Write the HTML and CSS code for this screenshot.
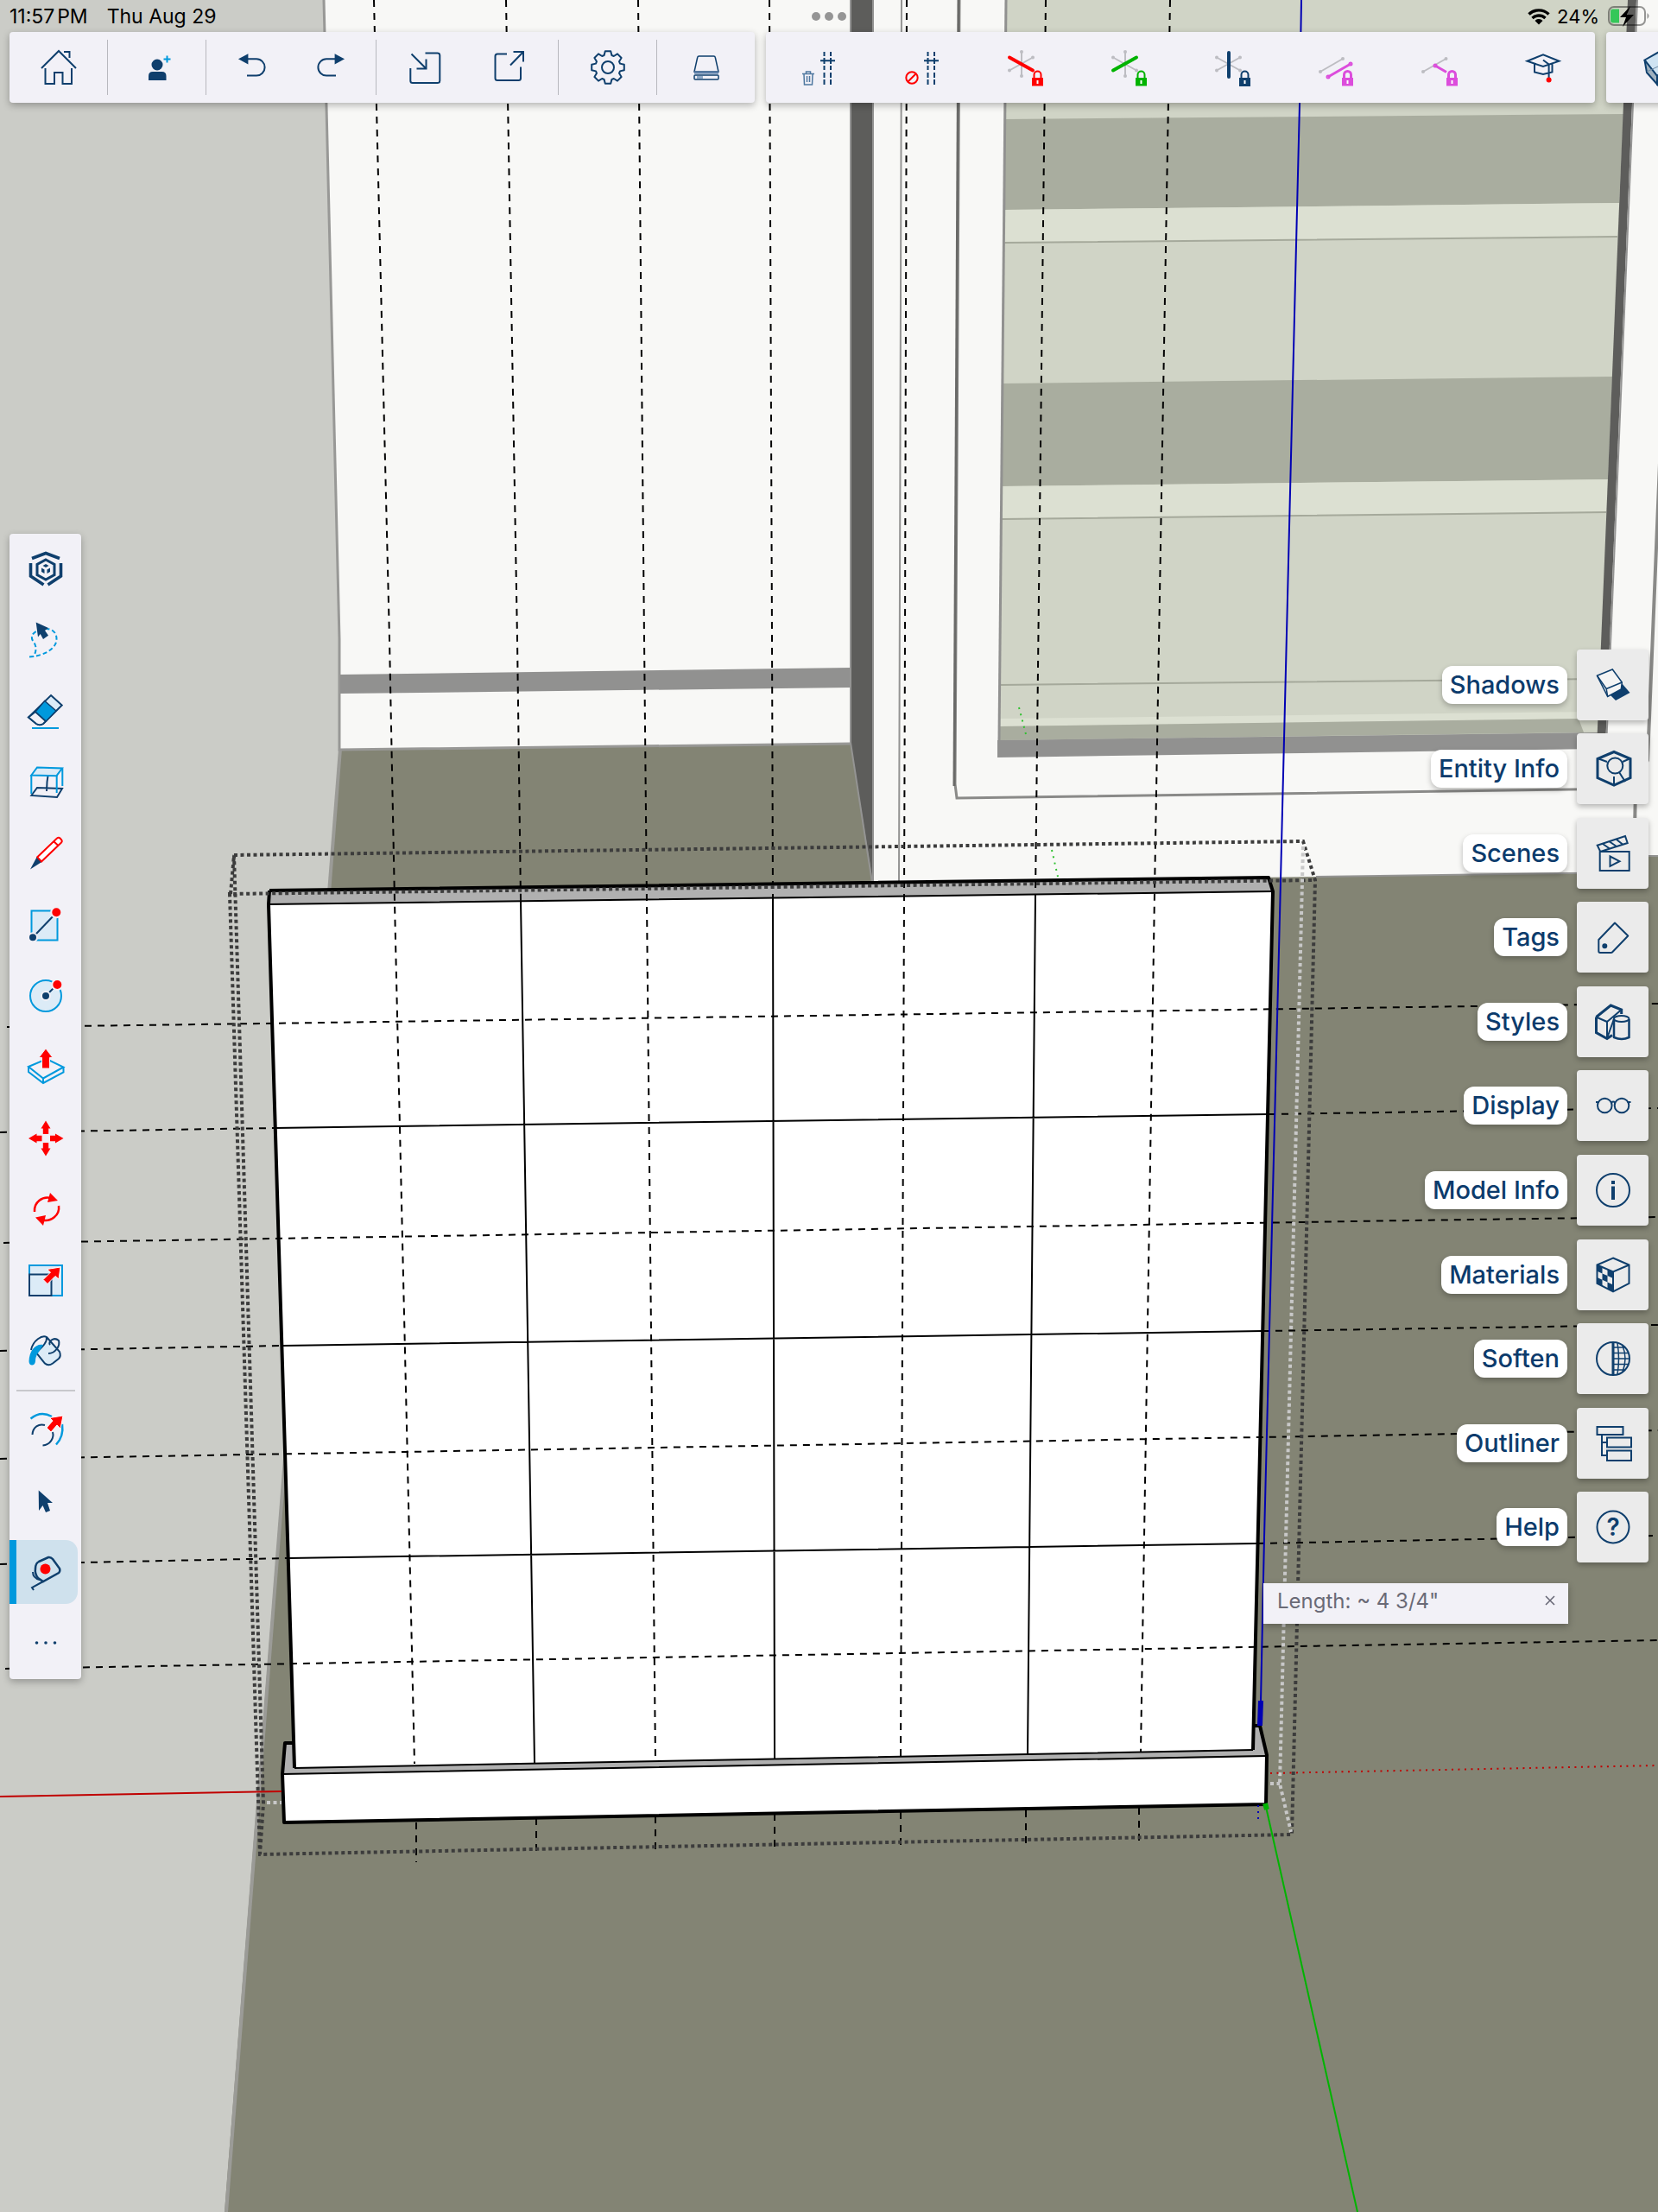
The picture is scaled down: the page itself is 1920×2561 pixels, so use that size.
FILE: index.html
```html
<!DOCTYPE html>
<html lang="en">
<head>
<meta charset="utf-8">
<meta name="viewport" content="width=device-width, initial-scale=1">
<title>3D Modeler</title>
<link rel="stylesheet" href="styles.css">
</head>
<body>
<div class="app">
  <svg class="scene" viewBox="0 0 1920 2561" preserveAspectRatio="xMidYMid slice" role="img" aria-label="Model viewport">
    <rect width="1920" height="2561" fill="#cbccc7"/>
    <!-- floor -->
    <path d="M394 860H1890L1894 990H1920V2561H260Z" fill="#838474"/>
    <path d="M394 867L262 2561" stroke="#9b9b97" stroke-width="4"/>
    <!-- left cabinet -->
    <path d="M374 0H985V861L394 868V780Z" fill="#f8f8f6"/>
    <path d="M375 0L393 740V868L985 861" stroke="#989896" stroke-width="3" fill="none"/>
    <path d="M394 781L985 773V796L394 803Z" fill="#919190"/>
    <path d="M985 0H1011V1022L985 860Z" fill="#5d5d5b"/>
    <path d="M985 0V860L1010 1022M1011 0V1020" stroke="#949493" stroke-width="2" fill="none"/>
    <!-- right cabinet -->
    <path d="M1012 0H1920V990H1895L1893 1010L1012 1022Z" fill="#f8f8f6"/>
    <path d="M1044 0L1041 1020M1524 1015L1893 1010M1895 991H1920" stroke="#949493" stroke-width="2" fill="none"/>
    <path d="M1930 340L1908 880L1894 912L1892 1010" stroke="#8a8a88" stroke-width="4" fill="none"/>
    <path d="M1111 0L1106 908L1108 924L1894 913" stroke="#8a8a88" stroke-width="3" fill="none"/>
    <path d="M1110 0L1105 910" stroke="#6a6a68" stroke-width="3"/>
    <!-- glass and shelves -->
    <path d="M1164 0H1890L1853 866L1156 876Z" fill="#d0d4c6"/>
    <path d="M1163 138L1880 132L1875 235L1162 243Z" fill="#a9ad9f"/>
    <path d="M1162 243L1875 235L1873 275L1162 281Z" fill="#dce0d2"/>
    <path d="M1161 444L1867 436L1862 555L1160 563Z" fill="#a9ad9f"/>
    <path d="M1160 563L1862 555L1860 593L1160 601Z" fill="#dce0d2"/>
    <path d="M1162 281L1873 274M1160 601L1860 593M1158 793L1852 786" stroke="#a5a99b" stroke-width="2"/>
    <path d="M1157 832L1852 824V832L1157 841Z" fill="#dce0d2"/>
    <path d="M1157 841L1828 832L1834 848L1156 857Z" fill="#a9ad9f"/>
    <path d="M1155 857L1850 848V867L1155 877Z" fill="#919190"/>
    <path d="M1165 0L1157 857" stroke="#919190" stroke-width="3"/>
    <path d="M1885 0H1895L1859 866H1849Z" fill="#5d5d5b"/>
    <path d="M1896 0L1860 866" stroke="#949493" stroke-width="2"/>
    <!-- board and tray -->
    <path d="M312 1031L1469 1016L1474 1032L1451 2026L341 2047L311 1047Z" fill="#fff"/>
    <path d="M312 1031L1469 1016L1474 1032L311 1047Z" fill="#b0b0b0"/>
    <path d="M330 2018H340L341 2047L1451 2026L1453 1998H1459L1467 2032L327 2054Z" fill="#b0b0b0"/>
    <path d="M327 2054L1467 2033L1466 2089L329 2110Z" fill="#fff"/>
    <g fill="none" stroke="#000">
      <path d="M311 1047L1474 1032M341 2047L1451 2026M327 2054L1467 2033" stroke-width="2"/>
      <path d="M312 1031L1469 1016L1474 1032L1451 2026M312 1031L311 1047L341 2047M340 2018H330L327 2054L329 2110L1466 2089L1467 2032L1459 1998H1453" stroke-width="4" stroke-linejoin="round"/>
      <path d="M603 1043L619 2041M895 1040L897 2036M1199 1036L1190 2030M318 1306L1469 1290M328 1558L1462 1541M335 1804L1456 1787" stroke-width="2"/>
    </g>
    <!-- construction guides -->
    <g class="guide">
      <path d="M433 0L451 740L457 1045L480 2042M482 2110V2156"/>
      <path d="M586 0L599 740L603 1043M621 2105V2148"/>
      <path d="M739 0L746 740L749 1045L759 2039M759 2103V2148"/>
      <path d="M891 0L894 740L895 1040M897 2100V2144"/>
      <path d="M1050 0L1048 740L1047 1038L1043 2033M1043 2098V2142"/>
      <path d="M1211 0L1201 860L1199 1036M1188 2096V2138"/>
      <path d="M1355 0L1340 860L1337 1034L1321 2028M1319 2093V2138"/>
      <path d="M8 1189L232 1186L1080 1174L1635 1166L1920 1162"/>
      <path d="M0 1311L318 1306M1469 1290L1920 1283"/>
      <path d="M4 1439L1632 1413L1920 1409"/>
      <path d="M0 1564L328 1558M1462 1541L1920 1534"/>
      <path d="M0 1689L1632 1661L1920 1656"/>
      <path d="M0 1811L335 1804M1456 1787L1920 1778"/>
      <path d="M6 1932L1386 1908L1920 1899"/>
    </g>
    <!-- selection bounds -->
    <g class="bounds" stroke-dasharray="4 3.5">
      <path d="M271 990L1509 974L1523 1019L1496 2124L301 2147L266 1035L1523 1019"/>
      <path d="M267 1035L271 990L305 2088L301 2147"/>
      <path class="bounds-far" d="M1509 980L1482 2065L1495 2121M1471 2065H1482M309 2087H326"/>
    </g>
    <!-- axes -->
    <g fill="none" stroke-width="2">
      <path d="M1507 0L1505 120L1482 1060L1464 1780L1460 1970" stroke="#0000b4"/>
      <path d="M1460 1969L1459 1998" stroke="#0000b4" stroke-width="6"/>
      <path d="M1457 2090V2108" stroke="#0000b4" stroke-dasharray="2 5"/>
      <path d="M0 2080L326 2074" stroke="#c00000"/>
      <path d="M1471 2053L1920 2044" stroke="#c00000" stroke-dasharray="2 5.5"/>
      <path d="M1465 2088L1467 2095" stroke="#00b400" stroke-width="6"/>
      <path d="M1466 2092L1572 2561" stroke="#00b400"/>
      <path d="M1180 819L1189 854M1218 984L1225 1015" stroke="#30c030" stroke-dasharray="2 5.5"/>
    </g>
  </svg>

  <header class="top">
    <div class="status">
      <time>11:57<span class="thin"> </span>PM</time>
      <span>Thu Aug 29</span>
      <button class="grabber" aria-label="Multitasking"><i></i><i></i><i></i></button>
      <svg class="wifi" viewBox="0 0 26 20" aria-hidden="true"><g fill="none" stroke="#000" stroke-width="3.4"><path d="M1.500 7.500a16.500 16.500 0 0 1 23 0M5.500 12a11 11 0 0 1 15 0"/></g><path d="M13 19.500l-4.500-4.600a6.500 6.500 0 0 1 9 0z"/></svg>
      <span class="percent">24%</span>
      <svg class="battery" viewBox="0 0 48 24" aria-hidden="true"><rect x="1" y="1" width="42" height="21" rx="6" fill="none" stroke="#000" stroke-opacity=".4" stroke-width="2"/><path d="M45.500 8q4 3.500 0 7z" fill="#000" fill-opacity=".4"/><path d="M6 3.500h7v16H6a3 3 0 0 1-3-3v-10a3 3 0 0 1 3-3z" fill="#35c759"/><path d="M26 0L14 13h7l-4 11 13-14h-8z"/></svg>
    </div>
    <nav class="toolbars">
      <div class="toolbar">
        <div class="group"><button class="wide" aria-label="Home"><svg class="icon" viewBox="0 0 48 48"><path d="M4 25L24 5l20 20M30 6h6.500v7M8.500 25v18H19V30h9.500v13H39V25"/></svg></button></div>
        <div class="group"><button class="wide" aria-label="Add collaborator"><svg class="icon" viewBox="0 0 48 48"><circle class="solid" cx="24" cy="21" r="5.500"/><path class="solid" d="M15 38v-4q0-4 4-4h10.500q4 0 4 4v4z"/><path class="sky" d="M35.500 10.500v8M31.500 14.500h8"/></svg></button></div>
        <div class="group pad"><button class="mid" aria-label="Undo"><svg class="icon" viewBox="0 0 48 48"><path class="solid" d="M10 14.300l8.400-4.500v9z"/><path d="M18 14.300h11a9.600 9.600 0 0 1 0 19.200H18"/></svg></button><button class="mid" aria-label="Redo"><svg class="icon" viewBox="0 0 48 48"><path class="solid" d="M38 14.300l-8.400-4.500v9z"/><path d="M30 14.300H19a9.600 9.600 0 0 0 0 19.200h11"/></svg></button></div>
        <div class="group pad"><button class="mid wider" aria-label="Import"><svg class="icon" viewBox="0 0 48 48"><path d="M8.500 8.500l17 17M14.500 25.500h11v-11M7.300 25v14.500q0 2.500 2.500 2.500h29q2.500 0 2.500-2.500V10q0-2.500-2.500-2.500H24.500"/></svg></button><button class="mid wider" aria-label="Export"><svg class="icon" viewBox="0 0 48 48"><path d="M25 21.500L40 6M28.500 6H40v11.500M21 8.500H10q-2.500 0-2.500 2.500v25.500q0 2.500 2.500 2.500h24.500q2.500 0 2.500-2.500V23.500"/></svg></button></div>
        <div class="group"><button class="wide" aria-label="Settings"><svg class="icon" viewBox="0 0 48 48"><path stroke-linejoin="round" d="M19.600 10l1.200-4.800h6.400l1.200 4.800 2.400 1 4.200-2.600 4.600 4.600-2.600 4.200 1 2.400 4.800 1.200v6.400l-4.800 1.200-1 2.400 2.600 4.200-4.600 4.600-4.200-2.600-2.400 1-1.200 4.800h-6.400l-1.200-4.800-2.400-1-4.200 2.600-4.600-4.600 2.600-4.200-1-2.400-4.800-1.200v-6.400l4.800-1.200 1-2.400-2.600-4.200 4.600-4.600 4.200 2.600z"/><circle cx="24" cy="24" r="7"/></svg></button></div>
        <div class="group"><button class="wide" aria-label="Storage"><svg class="icon" viewBox="0 0 48 48"><g stroke-width="1.500"><path d="M15.500 11h17q1.500 0 1.800 1.500L38 29H10l3.700-16.500q.3-1.500 1.800-1.500z"/><path d="M10 30h28" stroke="#5c7fa8" stroke-width="3"/><rect x="10" y="33" width="28" height="5" rx="1"/><path d="M13 35.500h7" stroke="#8fa9c6" stroke-width="3"/></g></svg></button></div>
      </div>
      <div class="toolbar">
        <button class="axis" aria-label="Delete guides"><svg class="icon" viewBox="0 0 48 48"><path d="M31.500 6v5M31.500 13v7M31.500 22v5M31.500 30v6M31.500 38v6M39 6v5M39 13v7M39 22v5M39 30v6M39 38v6M27 16.300h17"/><path stroke="#4f78a0" d="M6 31.500h14M10.500 31v-2h5v2M8 32l.5 12h9l.5-12M11.500 34v7M14.500 34v7" stroke-width="1.500"/></svg></button>
        <button class="axis" aria-label="Hide guides"><svg class="icon" viewBox="0 0 48 48"><path d="M31.500 6v5M31.500 13v7M31.500 22v5M31.500 30v6M31.500 38v6M39 6v5M39 13v7M39 22v5M39 30v6M39 38v6M27 16.300h17"/><g stroke="#f00"><circle cx="13" cy="36" r="6.700"/><path d="M8.500 40.500l9-9"/></g></svg></button>
        <button class="axis" aria-label="Lock red axis"><svg class="icon" viewBox="0 0 48 48"><g class="gray"><path d="M20 6v28M33 12.500L6 27.500"/><circle cx="20" cy="6" r="1"/><circle cx="20" cy="34" r="1"/><circle cx="33" cy="12.500" r="1"/><circle cx="6" cy="27.500" r="1"/></g><g class="red"><path class="bold" d="M6 12.500l27 15"/><path d="M34.500 36v-3.500a4 4 0 0 1 8 0V36"/><path class="lock" d="M32 36h13v9.500H32z"/></g><path class="key" d="M38.500 39v4"/></svg></button>
        <button class="axis" aria-label="Lock green axis"><svg class="icon" viewBox="0 0 48 48"><g class="gray"><path d="M20 6v28M6 12.500l27 15"/><circle cx="20" cy="6" r="1"/><circle cx="20" cy="34" r="1"/><circle cx="6" cy="12.500" r="1"/><circle cx="33" cy="27.500" r="1"/></g><g class="green"><path class="bold" d="M33 12.500L6 27.500"/><path d="M34.500 36v-3.500a4 4 0 0 1 8 0V36"/><path class="lock" d="M32 36h13v9.500H32z"/></g><path class="key" d="M38.500 39v4"/></svg></button>
        <button class="axis" aria-label="Lock blue axis"><svg class="icon" viewBox="0 0 48 48"><g class="gray"><path d="M33 12.500L6 27.500M6 12.500l27 15"/><circle cx="6" cy="12.500" r="1"/><circle cx="33" cy="27.500" r="1"/><circle cx="33" cy="12.500" r="1"/><circle cx="6" cy="27.500" r="1"/></g><path class="bold" d="M20 7v28"/><path d="M34.500 36v-3.500a4 4 0 0 1 8 0V36"/><path class="solid" d="M33 37h11v8H33z"/><path class="key" d="M38.500 39v4"/></svg></button>
        <button class="axis" aria-label="Lock parallel"><svg class="icon" viewBox="0 0 48 48"><g class="gray"><path d="M6 29l26-15"/><circle cx="6" cy="29" r="1"/><circle cx="32" cy="14" r="1"/></g><g class="pink"><path d="M15 35l26-15"/><circle cx="15" cy="35" r="1"/><circle cx="41" cy="20" r="1"/><path d="M33.500 36v-3.500a4 4 0 0 1 8 0V36"/><path class="lock" d="M31 36h13v9.500H31z"/></g><path class="key" d="M37.500 39v4"/></svg></button>
        <button class="axis" aria-label="Lock perpendicular"><svg class="icon" viewBox="0 0 48 48"><g class="gray"><path d="M5 29l26.500-15"/><circle cx="5" cy="29" r="1"/><circle cx="31.500" cy="14" r="1"/></g><g class="pink"><path d="M19 22l13 7.500"/><circle cx="19" cy="22" r="1"/><path d="M34.500 36v-3.500a4 4 0 0 1 8 0V36"/><path class="lock" d="M32 36h13v9.500H32z"/></g><path class="key" d="M38.500 39v4"/></svg></button>
        <button class="axis" aria-label="Learn"><svg class="icon" viewBox="0 0 48 48"><path d="M5.500 16.700L24 9.300l18.500 7.400L24 23L5.500 16.700zM14 20v9.500l10 2.500 10.500-2.500V20M24 15.500l6.600 5V36"/><circle class="dot" stroke="none" cx="30.600" cy="38.500" r="3"/></svg></button>
      </div>
      <div class="toolbar cut">
        <button class="axis" aria-label="Solid tools"><svg class="icon" viewBox="0 0 48 48"><path fill="#cfe3f2" d="M4.500 15.500L24 4.500l19.500 11L24 30l-5 4z"/><path fill="#9fb0be" d="M4.500 15.500L19 34v9.500L7 30z"/><path fill="#b5c7d6" d="M43.500 15.500L19 34v9.500L41 30z"/><path stroke="#6d8aa3" stroke-width="1" d="M7 29l13-6"/></svg></button>
      </div>
    </nav>
  </header>

  <aside class="palette" aria-label="Tools">
    <button aria-label="Search"><svg class="icon" viewBox="0 0 48 48"><g stroke-width="3.600"><path d="M8 11.500L24 5.500l16 6M6.500 17v15l15 10M41.500 17v15l-15 10"/><path d="M24 13l10 5.500v12L24 36l-10-5.500v-12z" stroke-width="3"/></g><path class="solid" d="M24 18l3.500 2L24 22l-3.500-2zM19 22.500l3.500 2v4.500l-3.500-2zM29 22.500l-3.500 2v4.500l3.500-2z" stroke="none"/></svg></button>
    <button aria-label="Lasso"><svg class="icon" viewBox="0 0 48 48"><path class="sky" stroke-dasharray="5 3" d="M5 43.500c16-1 31-9 31.500-20C37 13 28 9 19 12c-7 1-14 6-10 13 4 5 5 10 1 18"/><path class="solid" stroke="none" d="M12.700 3.600L27 10l-4 3 4 5.800-6 4.200-3.300-6L15 20.500z"/></svg></button>
    <button aria-label="Eraser"><svg class="icon" viewBox="0 0 48 48"><path fill="#dcebf7" d="M30 6l12.700 11.500L21 39q-4 2.500-8 0l-9-7.500z"/><path fill="#f2f1f7" d="M12 25l12 11-3 3q-4 2.500-8 0l-9-7.500z"/><path d="M22.700 12.500L36 24 24.300 36 12 25z" fill="#0099dd" stroke-width="1.500"/><path class="sky" d="M8 44h31"/></svg></button>
    <button aria-label="Section plane"><svg class="icon" viewBox="0 0 48 48"><path d="M7.300 39L14 30l29 1-6 10zM27 13q-2 10-2 21"/><path class="sky" fill="#dcebf7" d="M7.300 15.500L14 6.500l29 1-6.500 8.700z"/><path class="sky" d="M7.300 15v22M36.700 16v20M43.300 7.500V28"/></svg></button>
    <button aria-label="Pencil"><svg class="icon" viewBox="0 0 48 48"><path class="solid" stroke="none" d="M6 42.500l8-15 6 6z"/><path stroke="#f00" fill="#fff" d="M14.300 28.300L37 6.500q2-1.500 3.500 0l1.500 1.700q1.500 1.800 0 3.300L19 33.500zM33 10l5.500 5"/></svg></button>
    <button aria-label="Rectangle"><svg class="icon" viewBox="0 0 48 48"><rect class="sky" x="7.500" y="7.500" width="30" height="34" fill="#dcebf7"/><path d="M9 38.300L36 10"/><circle class="solid ring" cx="9" cy="38.300" r="5"/><circle class="dot ring" cx="36.300" cy="9.300" r="6"/></svg></button>
    <button aria-label="Circle"><svg class="icon" viewBox="0 0 48 48"><circle class="sky" cx="24" cy="24" r="18" fill="#dcebf7"/><path d="M24 24l13-13"/><circle class="solid ring" cx="24" cy="24" r="5"/><circle class="dot ring" cx="37.300" cy="11" r="6"/></svg></button>
    <button aria-label="Push pull"><svg class="icon" viewBox="0 0 48 48"><path class="sky" d="M4 24l21-9 19.500 9.500L21 37.500zM4 24v6l17 13 23.500-12.500v-6M21 37.500V43"/><path class="dot" d="M24 3l8 10.500H28.500V26h-9V13.500H16z" stroke="#f2f1f7" stroke-width="1"/></svg></button>
    <button aria-label="Move"><svg class="icon" viewBox="0 0 48 48"><path class="dot" stroke="none" d="M24 3.500l5.500 9h-2.300V19h-6.400v-6.500h-2.300zM24 44.500l5.500-9h-2.300V29h-6.400v6.500h-2.300zM4 24l9.500-5.500v2.300h6v6.400h-6v2.300zM44.500 24L35 18.500v2.300h-6v6.400h6v2.300z"/></svg></button>
    <button aria-label="Rotate"><svg class="icon" viewBox="0 0 48 48"><g stroke="#f00" stroke-width="2.500"><path d="M11 27C10 16 20 8.500 30 11M39 20c1.500 11-9 19-19 16.500"/></g><path class="dot" stroke="none" d="M29 5L38 14l-12 2zM21 43l-9-9.500L24 31z"/></svg></button>
    <button aria-label="Scale"><svg class="icon" viewBox="0 0 48 48"><rect class="sky" x="5" y="7" width="38" height="35" fill="#dcebf7"/><rect x="5" y="17.500" width="25.500" height="24.500"/><path class="dot" stroke="#fff" stroke-width="1" d="M41 9l-2 14-4-3.500-9 9-5-5 8.500-8.500-4-3.500z"/></svg></button>
    <button aria-label="Paint"><svg class="icon" viewBox="0 0 48 48"><path fill="#dcebf7" stroke="none" d="M12 21L25 13l5-2 11 13-4 12q-8 8-15 3L10 27z"/><path d="M7 22C9 11 20 4 25 7c1 7-7 13-12 18l10 12.500q4 3.500 9 0L39 32q3-3 1-8L25 7M27 26c8 0 14-9 12-15-6-5-13 2-10 5"/><path class="solid blue" stroke="none" d="M21 16C13 14 5 22 4.500 35c0 6 7 6 7.500 0C12 27 17 24 21 16z"/></svg></button>
    <hr>
    <button aria-label="Offset"><svg class="icon" viewBox="0 0 48 48"><path class="sky" d="M6.500 11.500Q18 2 31 9M43 18q2 14-7 23.500" stroke-width="2.500"/><path d="M8.500 30C9 21 16 17 23 19M32 27c2 7-3 15-11.500 15.500"/><path class="dot" stroke="#fff" stroke-width="1" d="M44 8l-3 15-4-4-7 8-5-5 7-8-3.500-3.500z"/></svg></button>
    <button aria-label="Select"><svg class="icon" viewBox="0 0 48 48"><path class="solid" stroke="none" d="M15.700 11.500L32 26h-6l3 9-5 2-3.500-8-4.500 6z"/></svg></button>
    <button class="active" aria-label="Tape measure" aria-pressed="true"><svg class="icon" viewBox="0 0 48 48"><path d="M12 20q0-6 4-8l11-5q3-.5 5 2l8 11q1 3-1 5L21 35l-6-4q-4-5-3-11z" stroke-width="2.500"/><path d="M9 24q0 7 8 9M21 35L8 42l2 3"/><circle class="dot" stroke="none" cx="23.500" cy="20.500" r="6"/></svg></button>
    <button aria-label="More tools"><svg class="icon" viewBox="0 0 48 48"><g class="solid" stroke="none"><circle cx="13.500" cy="24" r="1.800"/><circle cx="24" cy="24" r="1.800"/><circle cx="34.500" cy="24" r="1.800"/></g></svg></button>
  </aside>

  <aside class="panels" aria-label="Panels">
    <button><span class="label">Shadows</span><span class="tile"><svg class="icon" viewBox="0 0 48 48"><path class="solid" d="M34 22l9.500 11L27 42l-6-6z" stroke="none"/><path fill="#f4f4f4" stroke-width="1.500" d="M5.500 13.300L23.300 6l11 15-1 8-15.600 8.400z"/><path d="M5.500 13.300l10.700 15.200 18.100-7.500M16.200 28.500l1.500 9" stroke-width="1.500"/></svg></span></button>
    <button><span class="label">Entity Info</span><span class="tile"><svg class="icon" viewBox="0 0 48 48"><path d="M25 4.500l19 8v22L25 43 6 34.500v-22z" stroke-width="3"/><path d="M6 12l11 4M44 12l-9 4M25 33v9"/><circle cx="26.300" cy="20.500" r="9" fill="#ebebeb"/><path d="M31 28l7 11"/></svg></span></button>
    <button><span class="label">Scenes</span><span class="tile"><svg class="icon" viewBox="0 0 48 48"><path d="M8.700 22h34v22h-34zM5.700 14.700L38 4l2.700 8-31.400 10zM12 13l8 5.500M20 10.500l8 5.500M28 8l7 5.500M20.500 27.500l11 5.700-11 5.700z"/></svg></span></button>
    <button><span class="label">Tags</span><span class="tile"><svg class="icon" viewBox="0 0 48 48"><path stroke-linejoin="round" d="M26 7.500l15.300 15L23 41.500q-.5.500-1.500.500H9q-1.700 0-1.700-1.700V27z"/><circle class="solid" cx="14.300" cy="34.300" r="2"/></svg></span></button>
    <button><span class="label">Styles</span><span class="tile"><svg class="icon" viewBox="0 0 48 48"><path stroke-width="3" d="M4.500 18.500L21.300 5l12.400 5v5M4.500 18.500v18L17 43.500l6-4"/><path d="M4.500 18.500L17 24v19M17 24L33.700 10M17 43l9-25"/><path fill="#ebebeb" stroke-width="2.500" d="M25 21v21q9 4 17.500 0V21"/><ellipse cx="33.700" cy="20.500" rx="8.800" ry="3.500" fill="#ebebeb"/></svg></span></button>
    <button><span class="label">Display</span><span class="tile"><svg class="icon" viewBox="0 0 48 48"><circle cx="14.300" cy="24" r="8.300"/><circle cx="34" cy="24" r="8.300"/><path d="M4 20h4M40.500 20h4M22 20.500q2-2 4.500 0"/></svg></span></button>
    <button><span class="label">Model Info</span><span class="tile"><svg class="icon" viewBox="0 0 48 48"><circle cx="24" cy="24" r="19"/><path d="M24 19.500V35M24 13v4" stroke-width="4"/></svg></span></button>
    <button><span class="label">Materials</span><span class="tile"><svg class="icon" viewBox="0 0 48 48"><path d="M24 4.500l18.500 8V34L24 43.500 5.500 34V12.500zM5.500 12.500L24 20.500l18.500-8M24 20.500v23"/><path class="solid" stroke="none" d="M5.500 12.500l6 2.700v7.300l-6-2.700zM17.500 17.800l6.500 2.700v7.500l-6.500-2.900zM11.500 22.500l6 2.600v7.500l-6-2.800zM5.500 27l6 2.800V37l-6-3zM17.500 32.600l6.500 3v8l-6.500-3.300z"/></svg></span></button>
    <button><span class="label">Soften</span><span class="tile"><svg class="icon" viewBox="0 0 48 48"><circle cx="24" cy="24" r="19"/><path d="M24 5v38" stroke-width="3"/><path stroke-width="1.500" d="M24 11h13M24 17.500h17.500M24 24h19M24 30.500h17.500M24 37h13M29 6q3 18 0 36M35 9q6 15 0 30"/></svg></span></button>
    <button><span class="label">Outliner</span><span class="tile"><svg class="icon" viewBox="0 0 48 48"><path d="M5.500 5h30v9h-30zM17 17.500h28v11H17zM17 32.500h28v11.500H17zM11 14v24h6M11 23h6"/></svg></span></button>
    <button><span class="label">Help</span><span class="tile"><svg class="icon" viewBox="0 0 48 48"><circle cx="24" cy="24" r="18.500"/><text class="mark" x="24" y="34">?</text></svg></span></button>
  </aside>

  <div class="measure" role="status"><span>Length: ~ 4 3/4"</span><button aria-label="Close"><svg viewBox="0 0 12 12"><path d="M1 1l10 10M11 1L1 11" stroke="#666674" stroke-width="1.500"/></svg></button></div>
</div>
</body>
</html>
```
FILE: styles.css
```css
* { box-sizing: border-box; }

body {
  margin: 0;
  font-family: Inter, "Liberation Sans", sans-serif;
  color: #000;
}

button {
  border: 0;
  padding: 0;
  background: none;
  font: inherit;
  color: inherit;
}

.app {
  position: relative;
  display: grid;
  grid-template-columns: minmax(0, 1fr);
  min-height: 100vh;
  overflow: hidden;
}

/* every layer shares the one grid cell, over the model viewport */
.app > .top,
.app > .palette,
.app > .panels { grid-area: 1 / 1; }

.scene {
  position: absolute;
  inset: 0;
  width: 100%;
  height: 100%;
}

.guide { fill: none; stroke: #000; stroke-width: 2; stroke-dasharray: 8 7; }
.bounds { fill: none; stroke: #3c3c3c; stroke-width: 4; }
.bounds-far { stroke: #c8c8c8; }

/* status bar */
.top { align-self: start; position: relative; }

.status {
  display: flex;
  align-items: center;
  height: 37px;
  padding: 0 10px 0 11px;
  font-size: 23px;
}

.status time { margin-right: 22px; }
.thin { font-size: 10px; }

.grabber {
  position: absolute;
  left: 50%;
  top: 14px;
  display: flex;
  gap: 5px;
  transform: translateX(-50%);
}

.grabber i { width: 10px; height: 10px; border-radius: 50%; background: #959595; }
.wifi { width: 26px; height: 20px; margin-left: auto; }
.percent { margin: 0 10px 0 8px; font-size: 22px; }
.battery { width: 48px; height: 24px; }

/* toolbars */
.toolbars { display: flex; gap: 13px; padding-left: 11px; }

.toolbar {
  display: flex;
  flex: none;
  align-items: center;
  height: 82px;
  border-radius: 4px;
  background: #f2f1f7;
  box-shadow: 0 3px 8px rgba(0, 0, 0, .28);
}

.group { display: flex; align-items: center; height: 64px; }
.group + .group { border-left: 1px solid #b8b8be; }
.group.pad { padding: 0 7px; }
.toolbar button { display: grid; place-items: center; }
.wide { width: 113px; }
.mid { width: 91px; }
.mid.wider { width: 98px; }
.axis { width: 120px; }
.cut .axis { width: 128px; }

.icon {
  display: block;
  width: 48px;
  height: 48px;
  fill: none;
  stroke: #0f3f6d;
  stroke-width: 2;
}

.icon .solid { fill: #0f3f6d; }
.icon .solid.blue { fill: #0099dd; }
.icon .sky { stroke: #0099dd; }
.icon .bold { stroke-width: 4; stroke-linecap: round; }
.icon .gray { stroke: #bdbdc2; }
.icon .red { stroke: #f00; }
.icon .green { stroke: #00b300; }
.icon .pink { stroke: #dc4ddc; stroke-width: 3; }
.icon .lock { stroke: none; }
.icon .red .lock, .icon .dot { fill: #f00; }
.icon .green .lock { fill: #00b300; }
.icon .pink .lock { fill: #dc4ddc; }
.icon .key { stroke: #fff; }
.icon .ring { stroke: #f2f1f7; }
.icon .mark {
  fill: #0f3f6d;
  stroke: none;
  font-size: 28px;
  font-weight: 600;
  text-anchor: middle;
}

/* left tool palette */
.palette {
  align-self: center;
  position: relative;
  display: flex;
  flex-direction: column;
  width: 83px;
  min-height: 1326px;
  margin-left: 11px;
  border-radius: 4px;
  background: #f2f1f7;
  box-shadow: 0 3px 8px rgba(0, 0, 0, .28);
}

.palette button {
  flex: 1;
  display: grid;
  place-items: center;
  margin: 4px 0;
}

.palette hr {
  width: 68px;
  height: 2px;
  margin: 3px auto;
  border: 0;
  background: #c8c8cc;
}

.palette .active {
  margin-right: 4px;
  padding-right: 4px;
  border-left: 8px solid #0099dd;
  border-radius: 0 14px 14px 0;
  background: #cfe1ed;
}

/* right panel list */
.panels {
  align-self: center;
  justify-self: end;
  position: relative;
  display: flex;
  flex-direction: column;
  justify-content: space-between;
  align-items: flex-end;
  min-height: 1058px;
  margin-right: 11px;
}

.panels button { display: flex; align-items: center; gap: 11px; }

.label {
  padding: 0 9px;
  border-radius: 12px;
  background: #fff;
  box-shadow: 0 3px 6px rgba(0, 0, 0, .25);
  color: #0c3b6c;
  font-size: 29px;
  font-weight: 500;
  line-height: 44px;
}

.tile {
  display: grid;
  place-items: center;
  width: 83px;
  height: 82px;
  border-radius: 4px;
  background: #ebebeb;
  box-shadow: 0 3px 6px rgba(0, 0, 0, .28);
}

/* measurement read-out, floats over the model */
.measure {
  position: absolute;
  top: calc(50% + 552px);
  right: 104px;
  display: flex;
  justify-content: space-between;
  align-items: center;
  width: 353px;
  height: 47px;
  padding: 0 15px 6px 16px;
  background: #f2f1f7;
  box-shadow: 0 3px 8px rgba(0, 0, 0, .28);
  color: #6a6a76;
  font-size: 24px;
}

.measure svg { display: block; width: 12px; height: 12px; }
```
